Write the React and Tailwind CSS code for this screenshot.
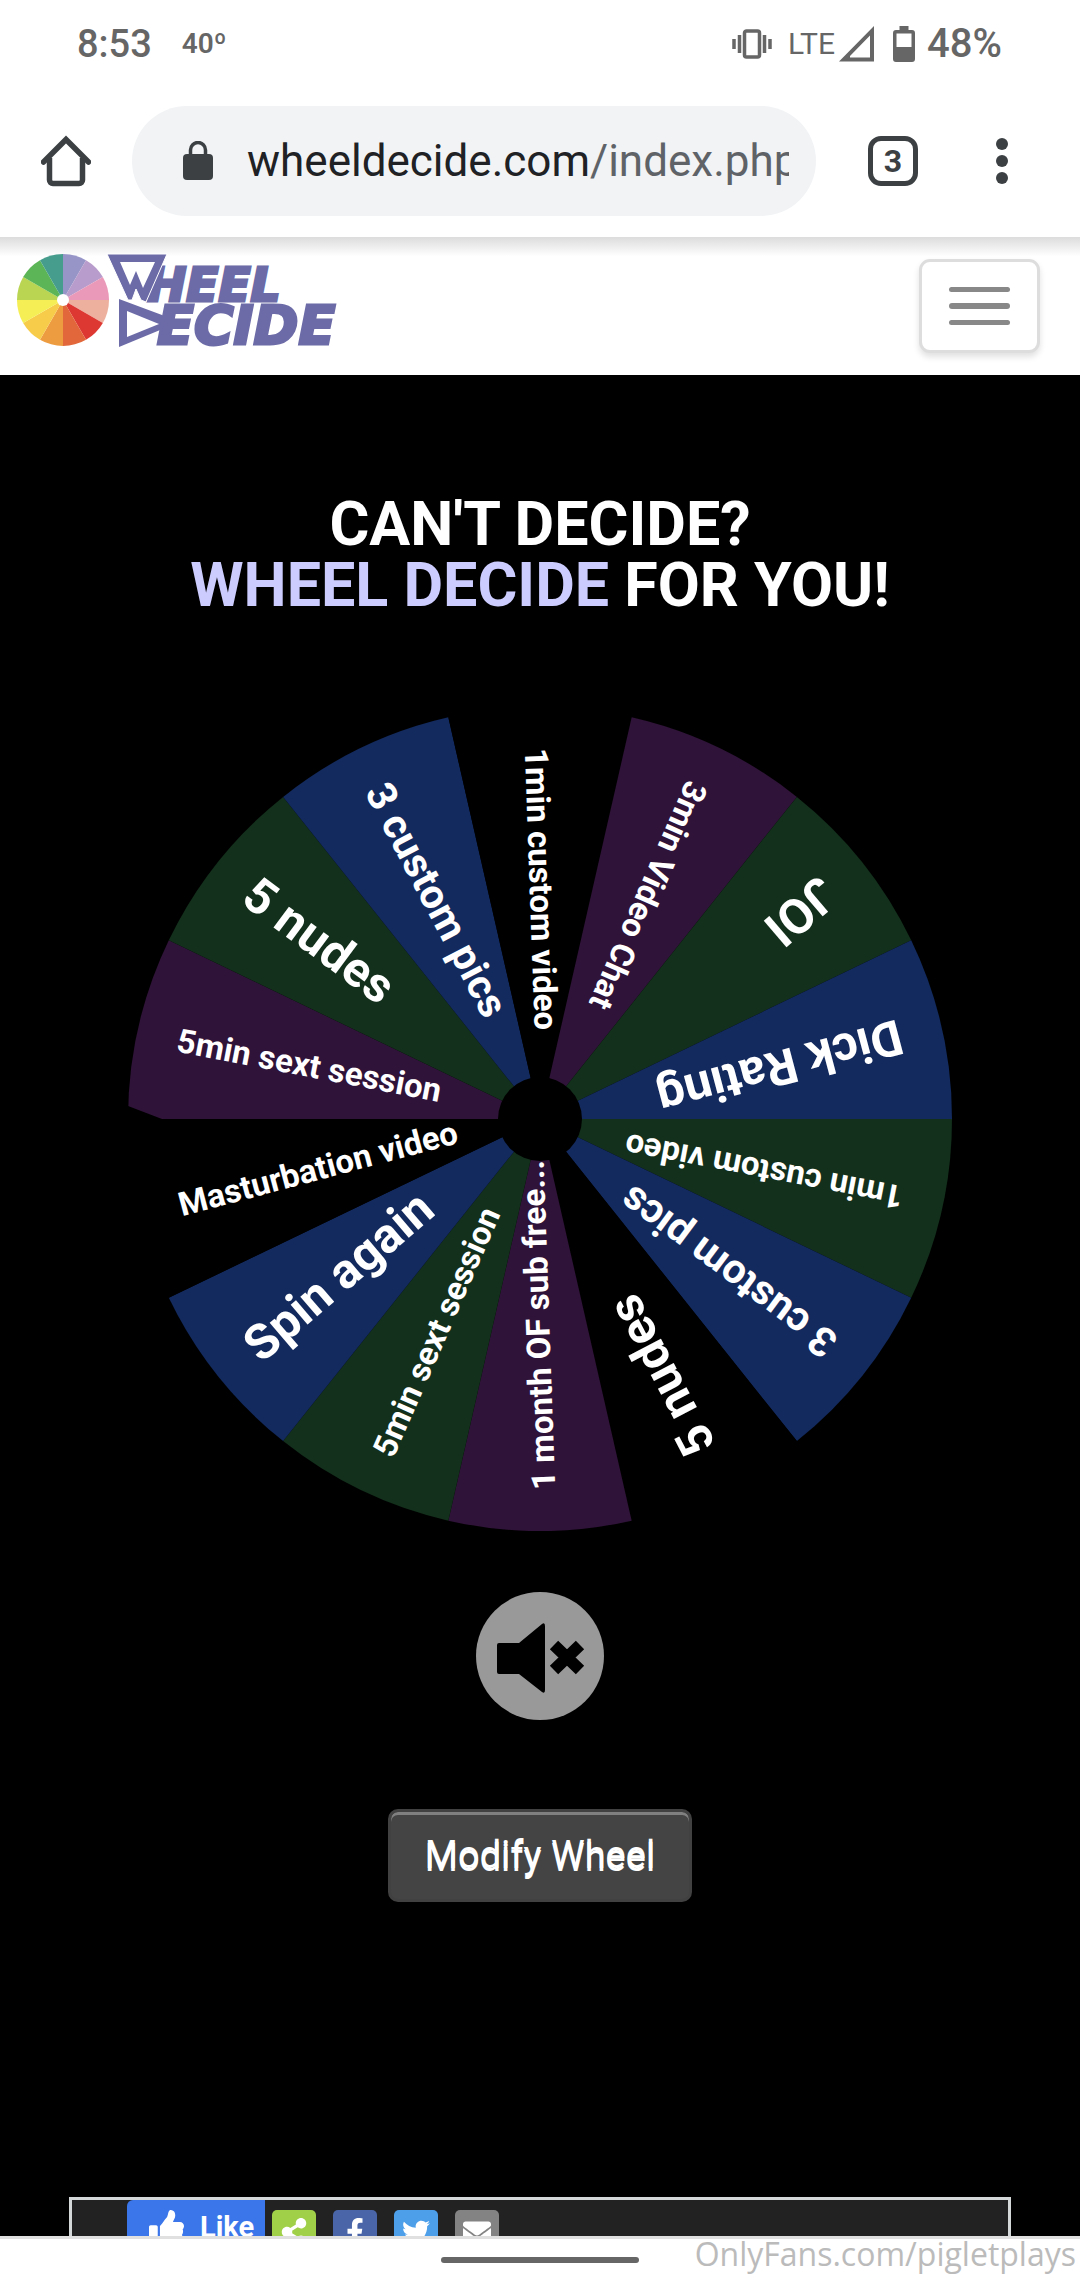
import React from "react";
import { FaThumbsUp, FaFacebookF, FaTwitter, FaShareAlt, FaEnvelope } from "react-icons/fa";

const GREEN = "#13301c";
const BLUE = "#132a5e";
const PURPLE = "#2f1338";
const BLACK = "#000000";

// Slices run clockwise, starting at three o'clock.
const SLICES = [
  { label: "1min custom video", fill: GREEN, size: 33 },
  { label: "3 custom pics", fill: BLUE, size: 41 },
  { label: "5 nudes", fill: BLACK, size: 49 },
  { label: "1 month OF sub free...", fill: PURPLE, size: 33 },
  { label: "5min sext session", fill: GREEN, size: 33 },
  { label: "Spin again", fill: BLUE, size: 49 },
  { label: "Masturbation video", fill: BLACK, size: 33 },
  { label: "5min sext session", fill: PURPLE, size: 33 },
  { label: "5 nudes", fill: GREEN, size: 49 },
  { label: "3 custom pics", fill: BLUE, size: 41 },
  { label: "1min custom video", fill: BLACK, size: 33 },
  { label: "3min Video Chat", fill: PURPLE, size: 33 },
  { label: "JOI", fill: GREEN, size: 49 },
  { label: "Dick Rating", fill: BLUE, size: 49 },
];

const LOGO_COLORS = [
  "#9795c8", "#b89ccb", "#ea9ab8", "#eeb09e", "#de3832", "#e2673a",
  "#ee9c40", "#f7cc4a", "#f5ee55", "#b9d552", "#5cb556", "#479d8d",
];

function slicePath(cx, cy, r, from, to) {
  const a = (from * Math.PI) / 180;
  const b = (to * Math.PI) / 180;
  return `M${cx} ${cy}L${cx + r * Math.cos(a)} ${cy + r * Math.sin(a)}A${r} ${r} 0 0 1 ${cx + r * Math.cos(b)} ${cy + r * Math.sin(b)}Z`;
}

function StatusBar() {
  return (
    <div className="flex h-21 shrink-0 items-center justify-between pt-1 pr-[78px] pl-[77px] text-[38px] leading-none font-medium text-[#666]">
      <div className="flex items-center gap-[30px]">
        <span>8:53</span>
        <span className="text-[28px] font-semibold">40º</span>
      </div>
      <div className="flex items-center">
        <svg width="40" height="30" viewBox="0 0 40 30" fill="none" stroke="#666" strokeWidth="3.5" aria-hidden="true">
          <rect x="12.5" y="2" width="15" height="26" rx="2" />
          <path d="M2 10v10M7.5 6v18M32.5 6v18M38 10v10" />
        </svg>
        <span className="ml-4 text-[30px] font-normal">LTE</span>
        <svg className="ml-1" width="36" height="36" viewBox="0 0 36 36" aria-hidden="true">
          <path fillRule="evenodd" fill="#666" d="M0 35.500L35 0V35.500ZM11 31.500H31V9.500L11 30Z" />
        </svg>
        <svg className="ml-[18px]" width="22" height="36" viewBox="0 0 22 36" aria-hidden="true">
          <path fillRule="evenodd" fill="#666" d="M6.500 0h9v4H19a3 3 0 0 1 3 3v26a3 3 0 0 1-3 3H3a3 3 0 0 1-3-3V7a3 3 0 0 1 3-3h3.500ZM3.500 7.500v13.500h15V7.500Z" />
        </svg>
        <span className="ml-3 text-[40px]">48%</span>
      </div>
    </div>
  );
}

function BrowserBar() {
  return (
    <div className="flex h-[153px] shrink-0 items-center pl-[41px]">
      <button type="button" aria-label="Home" className="shrink-0">
        <svg width="50" height="52" viewBox="0 0 50 52" fill="none" stroke="#3c4043" strokeWidth="5.500">
          <path d="M8.500 23V45a3.500 3.500 0 0 0 3.500 3.500H38a3.500 3.500 0 0 0 3.500-3.500V23" />
          <path d="M2.500 27L25 4.500L47.500 27" strokeLinecap="round" />
        </svg>
      </button>
      <button type="button" aria-label="Address" className="ml-[41px] flex h-[110px] min-w-0 flex-1 items-center rounded-full bg-[#f1f3f5] pr-[27px] pl-[51px]">
        <svg className="shrink-0" width="30" height="40" viewBox="0 0 30 40" aria-hidden="true">
          <rect x="0" y="13" width="30" height="26" rx="4" fill="#3c4043" />
          <path d="M7.500 14V9a7.500 7.500 0 0 1 15 0V14" fill="none" stroke="#3c4043" strokeWidth="3.500" />
        </svg>
        <span className="ml-[34px] block min-w-0 flex-1 overflow-hidden text-left text-[44px] leading-[60px] whitespace-nowrap text-[#202124]">
          wheeldecide.com<span className="text-[#5f6368]">/index.php</span>
        </span>
      </button>
      <button type="button" aria-label="Tabs" className="ml-[52px] flex size-[50px] shrink-0 items-center justify-center rounded-[13px] border-[5px] border-[#3c4043] text-[32px] leading-none font-bold text-[#3c4043]">
        3
      </button>
      <button type="button" aria-label="More" className="mr-[72px] ml-[78px] flex shrink-0 flex-col gap-[5px]">
        <span className="size-3 rounded-full bg-[#3c4043]" />
        <span className="size-3 rounded-full bg-[#3c4043]" />
        <span className="size-3 rounded-full bg-[#3c4043]" />
      </button>
    </div>
  );
}

function Logo() {
  return (
    <a href="#home" aria-label="Wheel Decide" className="block">
      <svg width="336" height="94" viewBox="0 0 336 94">
        {LOGO_COLORS.map((c, i) => (
          <path key={c} d={slicePath(46, 47, 46, i * 30 - 90, i * 30 - 60)} fill={c} />
        ))}
        <circle cx="46" cy="47" r="6" fill="#fff" />
        <path d="M102 46L145 62L160 70L102 94Z" fill="#6c6ba8" />
        <g
          fill="#6c6ba8"
          stroke="#6c6ba8"
          strokeWidth="3"
          fontFamily="DejaVu Sans, sans-serif"
          fontWeight="700"
          fontStyle="italic"
        >
          <text x="130" y="48" fontSize="47">HEEL</text>
          <text x="140" y="91" fontSize="54">ECIDE</text>
        </g>
        <path d="M90 1H150L129 49L124 47L119 36L115 47H111Z" fill="#6c6ba8" stroke="#fff" strokeWidth="1" />
        <path d="M103 9H138L126 35L119 18L113 32Z" fill="#fff" />
        <path d="M110 58L142 71L110 84Z" fill="#fff" />
      </svg>
    </a>
  );
}

function SiteHeader() {
  return (
    <header className="flex h-[138px] shrink-0 items-start justify-between bg-linear-to-b from-[#dcdcdc] to-white to-[14%] pt-4 pr-10 pl-[17px]">
      <Logo />
      <button type="button" aria-label="Menu" className="mt-1.5 flex h-[94px] w-[121px] flex-col items-center justify-center gap-[11px] rounded-[11px] border-[3px] border-[#ddd] bg-white shadow-[0_4px_6px_rgba(0,0,0,0.12)]">
        <span className="h-[5px] w-[61px] rounded-full bg-[#888]" />
        <span className="h-[6px] w-[61px] rounded-full bg-[#888]" />
        <span className="h-[5px] w-[61px] rounded-full bg-[#888]" />
      </button>
    </header>
  );
}

function Wheel() {
  const step = 360 / SLICES.length;
  return (
    <svg className="mt-[91px] block w-full max-w-[824px] shrink-0" viewBox="-412 -412 824 824" role="img" aria-label="Decision wheel">
      {SLICES.map((s, i) => (
        <path key={i} d={slicePath(0, 0, 412, i * step, (i + 1) * step)} fill={s.fill} />
      ))}
      <path d="M-414 -14L-412 -13L-378 0H-414Z" fill="#000" />
      {SLICES.map((s, i) => (
        <g key={i} transform={`rotate(${(i + 0.5) * step + 180}) rotate(-2 -237 0)`}>
          <text x="-371" y={s.size / 6 + 5} fontSize={s.size} fontWeight="700" fill="#fff">
            {s.label}
          </text>
        </g>
      ))}
      <circle r="42" fill="#000" />
    </svg>
  );
}

function MuteButton() {
  return (
    <button type="button" aria-label="Sound off" className="mt-[61px] block shrink-0">
      <svg width="128" height="128" viewBox="0 0 128 128">
        <circle cx="64" cy="64" r="64" fill="#999" />
        <path d="M21 53a2 2 0 0 1 2-2H43L66 32q3-2 3 2V98q0 4-3 2L43 82H23a2 2 0 0 1-2-2Z" fill="#000" />
        <path d="M78 53L104 78M104 53L78 78" stroke="#000" strokeWidth="12" />
      </svg>
    </button>
  );
}

function ShareIcon({ label, className, children }) {
  return (
    <a href="#share" aria-label={label} className={className}>
      {children}
    </a>
  );
}

function ShareCard() {
  return (
    <div className="mt-[295px] flex h-[90px] w-full shrink-0 items-start border-[3px] border-[#d4d8d8] bg-[#222] pl-[55px] text-white">
      <button type="button" className="flex h-[54px] w-[138px] items-center gap-4 rounded-l-[6px] bg-[#3b76ea] pl-[22px] text-[29px] leading-none font-bold">
        <FaThumbsUp size={35} />
        Like
      </button>
      <div className="mt-2.5 ml-[7px] flex gap-[17px]">
        <ShareIcon label="Share" className="flex size-11 items-center justify-center rounded-[5px] bg-[#a0d048]">
          <FaShareAlt size={28} />
        </ShareIcon>
        <ShareIcon label="Facebook" className="flex size-11 items-center justify-center rounded-[5px] bg-[#4a66a8]">
          <FaFacebookF size={28} />
        </ShareIcon>
        <ShareIcon label="Twitter" className="flex size-11 items-center justify-center rounded-[5px] bg-[#4d9fea]">
          <FaTwitter size={28} />
        </ShareIcon>
        <ShareIcon label="Email" className="flex size-11 items-center justify-center rounded-[5px] bg-[#838383]">
          <FaEnvelope size={28} />
        </ShareIcon>
      </div>
    </div>
  );
}

export default function App() {
  return (
    <div className="flex h-screen flex-col overflow-hidden bg-white font-['Roboto',sans-serif]">
      <StatusBar />
      <BrowserBar />
      <SiteHeader />
      <main className="flex min-h-0 flex-1 flex-col items-center overflow-hidden bg-black px-[69px] pt-[119px]">
        <h1 className="text-center text-[61px] leading-[61px] font-bold text-white">
          CAN'T DECIDE?
          <br />
          <span className="text-[#ccccff]">WHEEL DECIDE</span> FOR YOU!
        </h1>
        <Wheel />
        <MuteButton />
        <button type="button" className="mt-[89px] h-[93px] shrink-0 rounded-[10px] border-[3px] border-[#414141] bg-[#444] px-[34px] pt-1 text-[38px] leading-none text-white shadow-[inset_0_3px_0_#808080] [text-shadow:0_-3px_0_#fff]">
          Modify Wheel
        </button>
        <ShareCard />
      </main>
      <footer className="grid h-11 shrink-0 grid-cols-[1fr_198px_1fr] items-center border-t-[3px] border-[#e0e0e0] bg-white">
        <span className="col-start-2 h-1.5 rounded-full bg-[#666]" />
        <span className="self-start pr-1 text-right font-['Open_Sans',sans-serif] text-[32px] leading-[30px] whitespace-nowrap text-[#bbb]">
          OnlyFans.com/pigletplays
        </span>
      </footer>
    </div>
  );
}
